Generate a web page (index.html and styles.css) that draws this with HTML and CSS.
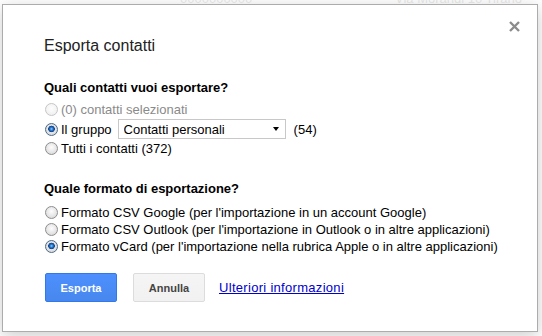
FILE: index.html
```html
<!DOCTYPE html>
<html lang="it">
<head>
    <meta charset="UTF-8">
    <title>Esporta contatti</title>
    <link rel="stylesheet" href="styles.css">
</head>
<body>
    <div class="page">
        <div class="page-row">
            <span class="page-num">0000000000</span>
            <span class="page-addr">Via Morandi 10 Tirano</span>
        </div>
    </div>
    <div class="overlay"></div>

    <div class="dialog">
        <button class="close" aria-label="Chiudi">
            <svg width="11" height="11" viewBox="0 0 11 11"><path d="M1 1L10 10M10 1L1 10" stroke="#8c8c8c" stroke-width="2.4"/></svg>
        </button>
        <h1 class="dialog-title">Esporta contatti</h1>

        <h2 class="section-title">Quali contatti vuoi esportare?</h2>
        <div class="options">
            <label class="option disabled"><input type="radio" name="chi" disabled>(0) contatti selezionati</label>
            <label class="option group"><input type="radio" name="chi" checked>Il gruppo
                <span class="select">
                    <select>
                        <option>Contatti personali</option>
                        <option>Amici</option>
                        <option>Famiglia</option>
                    </select>
                </span>
                (54)</label>
            <label class="option"><input type="radio" name="chi">Tutti i contatti (372)</label>
        </div>

        <h2 class="section-title second">Quale formato di esportazione?</h2>
        <div class="options compact">
            <label class="option"><input type="radio" name="formato">Formato CSV Google (per l'importazione in un account Google)</label>
            <label class="option"><input type="radio" name="formato">Formato CSV Outlook (per l'importazione in Outlook o in altre applicazioni)</label>
            <label class="option"><input type="radio" name="formato" checked>Formato vCard (per l'importazione nella rubrica Apple o in altre applicazioni)</label>
        </div>

        <div class="buttons">
            <button class="btn primary">Esporta</button>
            <button class="btn">Annulla</button>
            <a href="#" class="more">Ulteriori informazioni</a>
        </div>
    </div>
</body>
</html>
```

FILE: styles.css
```css
body {
    margin: 0;
    background: #fff;
    font-family: "Liberation Sans", Arial, sans-serif;
    font-size: 13px;
    color: #222;
    overflow: hidden;
}
.page {
    height: 336px;
}
.page-row {
    display: flex;
    margin-top: -9px;
    padding-left: 180px;
    color: #aaa;
}
.page-num {
    width: 215px;
}
.overlay {
    position: absolute;
    inset: 0;
    background: rgba(255, 255, 255, 0.75);
}
.dialog {
    position: absolute;
    left: 2px;
    top: 4px;
    width: 536px;
    height: 328px;
    box-sizing: border-box;
    background: #fff;
    border: 1px solid #acacac;
    box-shadow: 0 4px 16px rgba(0, 0, 0, 0.2);
    padding: 29px 20px 0 41px;
}
.close {
    position: absolute;
    top: 16px;
    right: 17px;
    width: 11px;
    height: 11px;
    padding: 0;
    border: none;
    background: none;
    cursor: pointer;
    display: flex;
}
.dialog-title {
    margin: 0;
    font-size: 16px;
    font-weight: normal;
    line-height: 24px;
    color: #222;
}
.section-title {
    margin: 21px 0 0;
    font-size: 13px;
    font-weight: bold;
    line-height: 17px;
    color: #000;
}
.section-title.second {
    margin-top: 22px;
}
.options {
    display: flex;
    flex-direction: column;
    margin-top: 4px;
}
.option {
    display: flex;
    align-items: center;
    height: 19px;
    color: #000;
    white-space: nowrap;
}
.option.group {
    height: 20px;
}
.option.disabled {
    color: #8a8a8a;
}
.options.compact {
    margin-top: 7px;
}
.options.compact .option {
    height: 17px;
}
.option input {
    appearance: none;
    width: 13px;
    height: 13px;
    margin: 0 3px 0 1px;
    border-radius: 50%;
    border: 1px solid #8d8d8d;
    box-sizing: border-box;
    background: radial-gradient(circle at 50% 40%, #fdfdfd 0, #e4e4e4 60%, #cfcfcf 100%);
    flex-shrink: 0;
}
.option input:checked {
    border-color: #4a6a8c;
    background: radial-gradient(circle at 50% 45%, #8fd2ff 0, #2a7ad0 1.5px, #0f3f86 3px, #e6e6e6 3.6px, #d2d2d2 100%);
}
.option input:disabled {
    border-color: #c6c6c6;
    background: radial-gradient(circle at 50% 40%, #fdfdfd 0, #ececec 100%);
}
.select {
    position: relative;
    display: inline-flex;
    margin: 0 8px 0 6px;
}
.select select {
    appearance: none;
    width: 168px;
    height: 20px;
    border: 1px solid #c8c8c8;
    border-radius: 0;
    background: #fff;
    padding: 0 0 0 5px;
    font-family: inherit;
    font-size: 13px;
    color: #000;
}
.select::after {
    content: "";
    position: absolute;
    right: 7px;
    top: 8px;
    border-left: 3px solid transparent;
    border-right: 3px solid transparent;
    border-top: 4px solid #000;
}
.buttons {
    display: flex;
    align-items: center;
    margin-top: 18px;
    padding-left: 1px;
}
.btn {
    min-width: 72px;
    height: 29px;
    margin-right: 16px;
    padding: 0 8px;
    border: 1px solid #dcdcdc;
    border-radius: 2px;
    background: linear-gradient(#f5f5f5, #f1f1f1);
    color: #444;
    font-family: inherit;
    font-size: 11px;
    font-weight: bold;
    cursor: pointer;
}
.btn.primary {
    border-color: #3079ed;
    background: linear-gradient(#4d90fe, #4787ed);
    color: #fff;
}
.more {
    margin-left: -2px;
    color: #00c;
    font-size: 13px;
    letter-spacing: 0.3px;
}
```
